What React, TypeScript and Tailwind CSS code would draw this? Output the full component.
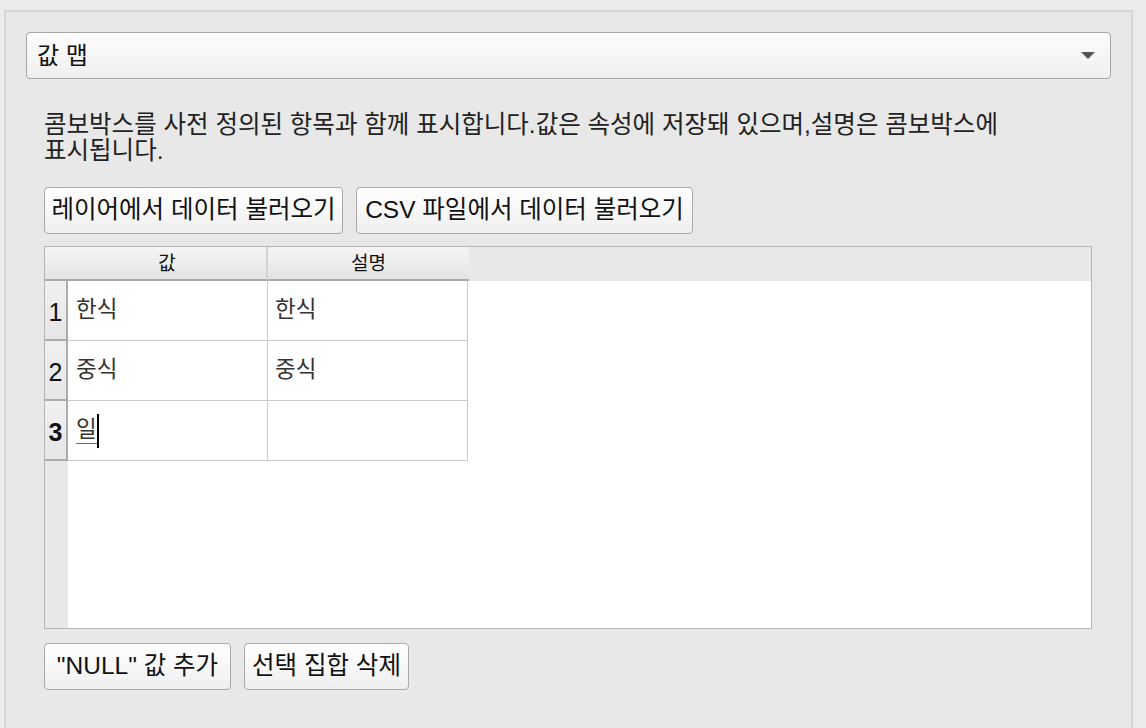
import React from "react";

const font = { fontFamily: '"Liberation Sans", "Noto Sans CJK KR", sans-serif' };

function Btn({ children, w }: { children: React.ReactNode; w: string }) {
  return (
    <div
      className={`${w} h-[47px] flex items-center justify-center rounded-[4px] border border-[#a9a9a9] bg-gradient-to-b from-[#ffffff] to-[#efefef] text-[24.5px] leading-none text-[#111] shrink-0 whitespace-nowrap`}
    >
      {children}
    </div>
  );
}

const rows = [
  { n: "1", v: "한식", d: "한식" },
  { n: "2", v: "중식", d: "중식" },
  { n: "3", v: "일", d: "" },
];

export default function App() {
  return (
    <div className="w-[1146px] h-[728px] overflow-hidden bg-[#ececec] pt-[10px] pl-[4px]" style={font}>
      <div className="w-[1129px] h-[740px] bg-[#e8e8e8] border-t-2 border-l-2 border-r-2 border-[#d6d6d6] pt-[20px] px-[20px]">
        {/* combo */}
        <div className="h-[47px] rounded-[4px] border border-[#a6a6a6] bg-gradient-to-b from-[#fdfdfd] to-[#efefef] flex items-center pl-[10px] pr-[15px]">
          <span className="text-[24px] leading-none text-[#111]">값 맵</span>
          <div className="ml-auto w-0 h-0 border-l-[7px] border-r-[7px] border-t-[7px] border-l-transparent border-r-transparent border-t-[#555]" />
        </div>

        <div className="pl-[18px] pr-[19px]">
          <p className="mt-[33px] w-[990px] break-keep text-[24.5px] leading-[26px] text-[#222]">
            콤보박스를 사전 정의된 항목과 함께 표시합니다.값은 속성에 저장돼 있으며,설명은 콤보박스에 표시됩니다.
          </p>

          <div className="mt-[23px] flex gap-[13px]">
            <Btn w="w-[299px]">레이어에서 데이터 불러오기</Btn>
            <Btn w="w-[337px]">CSV 파일에서 데이터 불러오기</Btn>
          </div>

          {/* table */}
          <div className="mt-[12px] h-[383px] border border-[#b5b5b5] bg-white flex flex-col">
            <div className="h-[34px] flex bg-[#e8e8e8] shrink-0">
              <div className="w-[23px] bg-gradient-to-b from-[#f5f5f5] to-[#e4e4e4] border-b-2 border-[#a9a9a9]" />
              <div className="w-[200px] bg-gradient-to-b from-[#f5f5f5] to-[#e4e4e4] border-b-2 border-[#a9a9a9] border-r-2 border-r-[#d4d4d4] flex items-center justify-center text-[19px] leading-none text-[#111]">
                값
              </div>
              <div className="w-[201px] bg-gradient-to-b from-[#f5f5f5] to-[#e4e4e4] border-b-2 border-[#a9a9a9] flex items-center justify-center text-[19px] leading-none text-[#111]">
                설명
              </div>
            </div>
            <div className="flex-1 flex">
              <div className="w-[23px] bg-[#e8e8e8] shrink-0 flex flex-col">
                {rows.map((r) => (
                  <div
                    key={r.n}
                    className={`h-[60px] flex items-center justify-center pt-[4px] bg-gradient-to-b from-[#f0f0f0] to-[#e6e6e6] border-r-2 border-b-2 border-[#acacac] text-[25px] leading-none text-[#111] ${r.n === "3" ? "font-bold" : ""}`}
                  >
                    {r.n}
                  </div>
                ))}
              </div>
              <div className="flex flex-col">
                {rows.map((r) => (
                  <div key={r.n} className="h-[60px] flex">
                    <div className="w-[200px] border-r border-b border-[#cacaca] flex items-center pl-[8px] text-[22.5px] leading-none text-[#333]">
                      {r.n === "3" ? (
                        <span className="relative flex items-center">
                          <span className="border-b border-[#2f6fe0] leading-[26px]">일</span>
                          <span className="w-[2px] h-[34px] bg-black" />
                        </span>
                      ) : (
                        r.v
                      )}
                    </div>
                    <div className="w-[200px] border-r border-b border-[#cacaca] flex items-center pl-[7px] text-[22.5px] leading-none text-[#333]">
                      {r.d}
                    </div>
                  </div>
                ))}
              </div>
            </div>
          </div>

          <div className="mt-[14px] flex gap-[13px]">
            <Btn w="w-[187px]">"NULL" 값 추가</Btn>
            <Btn w="w-[165px]">선택 집합 삭제</Btn>
          </div>
        </div>
      </div>
    </div>
  );
}
